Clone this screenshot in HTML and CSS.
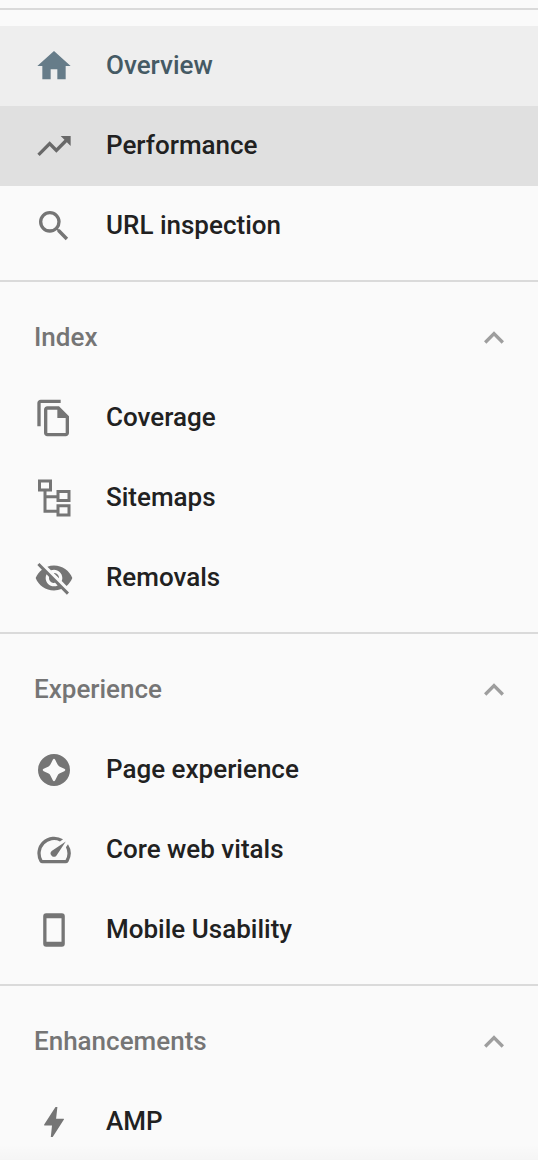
FILE: index.html
```html
<!DOCTYPE html>
<html lang="en">
<head>
<meta charset="utf-8">
<title>Navigation</title>
<link rel="stylesheet" href="styles.css">
</head>
<body>
<nav class="sidebar">
  <section class="group">
    <a class="item item-selected">
      <svg class="icon" viewBox="0 0 24 24"><path d="M10 20v-6h4v6h5v-8h3L12 3 2 12h3v8z"/></svg>
      <span class="label">Overview</span>
    </a>
    <a class="item item-hover">
      <svg class="icon" viewBox="0 0 24 24"><path d="M16 6l2.29 2.29-4.88 4.88-4-4L2 16.59 3.41 18l6-6 4 4 6.3-6.29L22 12V6z"/></svg>
      <span class="label">Performance</span>
    </a>
    <a class="item">
      <svg class="icon" viewBox="0 0 24 24"><path d="M15.5 14h-.79l-.28-.27A6.47 6.47 0 0 0 16 9.5 6.5 6.5 0 1 0 9.5 16c1.61 0 3.09-.59 4.23-1.57l.27.28v.79l5 4.99L20.49 19l-4.99-5zm-6 0a4.5 4.5 0 1 1 0-9 4.5 4.5 0 0 1 0 9z"/></svg>
      <span class="label">URL inspection</span>
    </a>
  </section>

  <section class="group">
    <header class="heading">
      <span class="label">Index</span>
      <svg class="icon" viewBox="0 0 24 24"><path d="M12 8l-6 6 1.41 1.41L12 10.83l4.59 4.58L18 14z"/></svg>
    </header>
    <a class="item">
      <svg class="icon" viewBox="0 0 24 24"><path d="M16 1H4c-1.1 0-2 .9-2 2v14h2V3h12V1zm-1 4H8c-1.1 0-1.99.9-1.99 2L6 21c0 1.1.89 2 1.99 2H19c1.1 0 2-.9 2-2V11l-6-6zM8 21V7h6v5h5v9H8z"/></svg>
      <span class="label">Coverage</span>
    </a>
    <a class="item">
      <svg class="icon icon-line" viewBox="0 0 40 40"><path d="M5.500 2.900h11v9.200h-11zM24 13.400h11v9.200H24zM24 27.700h11v9.200H24zM11 12v21.200h13M11 18.700h13"/></svg>
      <span class="label">Sitemaps</span>
    </a>
    <a class="item">
      <svg class="icon" viewBox="0 0 24 24"><path d="M12 7c2.76 0 5 2.24 5 5 0 .65-.13 1.26-.36 1.83l2.92 2.92c1.51-1.26 2.7-2.89 3.43-4.75-1.73-4.39-6-7.5-11-7.5-1.4 0-2.74.25-3.98.7l2.16 2.16C10.74 7.13 11.35 7 12 7zM2 4.27l2.28 2.28.46.46C3.08 8.3 1.78 10.02 1 12c1.73 4.39 6 7.5 11 7.5 1.55 0 3.03-.3 4.38-.84l.42.42L19.73 22 21 20.73 3.27 3 2 4.27zM7.53 9.8l1.55 1.55c-.05.21-.08.43-.08.65 0 1.66 1.34 3 3 3 .22 0 .44-.03.65-.08l1.55 1.55c-.67.33-1.41.53-2.2.53-2.76 0-5-2.24-5-5 0-.79.2-1.53.53-2.2zm4.31-.78l3.15 3.15.02-.16c0-1.66-1.34-3-3-3l-.17.01z"/></svg>
      <span class="label">Removals</span>
    </a>
  </section>

  <section class="group">
    <header class="heading">
      <span class="label">Experience</span>
      <svg class="icon" viewBox="0 0 24 24"><path d="M12 8l-6 6 1.41 1.41L12 10.83l4.59 4.58L18 14z"/></svg>
    </header>
    <a class="item">
      <svg class="icon" viewBox="0 0 40 40"><path fill-rule="evenodd" d="M20 4a16 16 0 1 0 0 32 16 16 0 0 0 0-32zM21.200 9.700L23.600 14.600Q24.200 15.800 25.400 16.400L30.300 18.800Q32.300 20 30.300 21.200L25.400 23.600Q24.200 24.200 23.600 25.400L21.200 30.300Q20 32.300 18.800 30.300L16.400 25.400Q15.800 24.200 14.600 23.600L9.700 21.200Q7.700 20 9.700 18.800L14.600 16.400Q15.800 15.800 16.400 14.600L18.800 9.700Q20 7.700 21.200 9.700z"/></svg>
      <span class="label">Page experience</span>
    </a>
    <a class="item">
      <svg class="icon" viewBox="0 0 24 24"><path d="M20.38 8.57l-1.23 1.85a8 8 0 0 1-.22 7.58H5.07A8 8 0 0 1 15.58 6.85l1.85-1.23A10 10 0 0 0 3.35 19a2 2 0 0 0 1.72 1h13.85a2 2 0 0 0 1.74-1 10 10 0 0 0-.27-10.44zM10.59 15.41a2 2 0 0 0 2.83 0l5.66-8.49-8.49 5.66a2 2 0 0 0 0 2.83z"/></svg>
      <span class="label">Core web vitals</span>
    </a>
    <a class="item">
      <svg class="icon" viewBox="0 0 40 40"><path fill-rule="evenodd" d="M12.200 3.200h15.600a3 3 0 0 1 3 3v27.600a3 3 0 0 1-3 3H12.200a3 3 0 0 1-3-3V6.200a3 3 0 0 1 3-3zM12.500 8.200v23.600h15V8.200z"/></svg>
      <span class="label">Mobile Usability</span>
    </a>
  </section>

  <section class="group">
    <header class="heading">
      <span class="label">Enhancements</span>
      <svg class="icon" viewBox="0 0 24 24"><path d="M12 8l-6 6 1.41 1.41L12 10.83l4.59 4.58L18 14z"/></svg>
    </header>
    <a class="item">
      <svg class="icon" viewBox="0 0 40 40"><path d="M21.500 5h1.900L22.100 16.700h7.400Q30.400 16.700 29.900 17.600L18.700 35H16.800L18 23.500H10.600Q9.700 23.500 10.200 22.600z"/></svg>
      <span class="label">AMP</span>
    </a>
  </section>
</nav>
</body>
</html>
```
FILE: styles.css
```css
* {
  box-sizing: border-box;
}

body {
  margin: 0;
  background: #fafafa;
}

.sidebar {
  position: relative;
  height: 1160px;
  padding-top: 8px;
  overflow: hidden;
  font: 500 26px/40px Roboto, sans-serif;
  color: #212121;
}

/* Soft fade along the bottom edge of the scrolling list */
.sidebar::after {
  content: "";
  position: absolute;
  inset: auto 0 0;
  height: 16px;
  background: linear-gradient(transparent, rgba(0, 0, 0, 0.02));
}

.group {
  padding: 16px 0 14px;
  border-top: 2px solid #dadada;
}

.item,
.heading {
  display: flex;
  align-items: center;
  height: 80px;
  padding: 0 24px 0 34px;
}

.item {
  gap: 32px;
}

.heading {
  justify-content: space-between;
  color: #757575;
}

.label {
  padding-bottom: 2px;
  white-space: nowrap;
}

.icon {
  flex: none;
  width: 40px;
  height: 40px;
  fill: #757575;
}

.icon-line {
  fill: none;
  stroke: #757575;
  stroke-width: 3;
}

.heading .icon {
  fill: #9e9e9e;
}

.item-selected {
  background: #eeeeee;
  color: #455a64;
}

.item-selected .icon {
  fill: #667c89;
}

.item-hover {
  background: #e0e0e0;
}

.item-hover .icon {
  fill: #696969;
}
```
